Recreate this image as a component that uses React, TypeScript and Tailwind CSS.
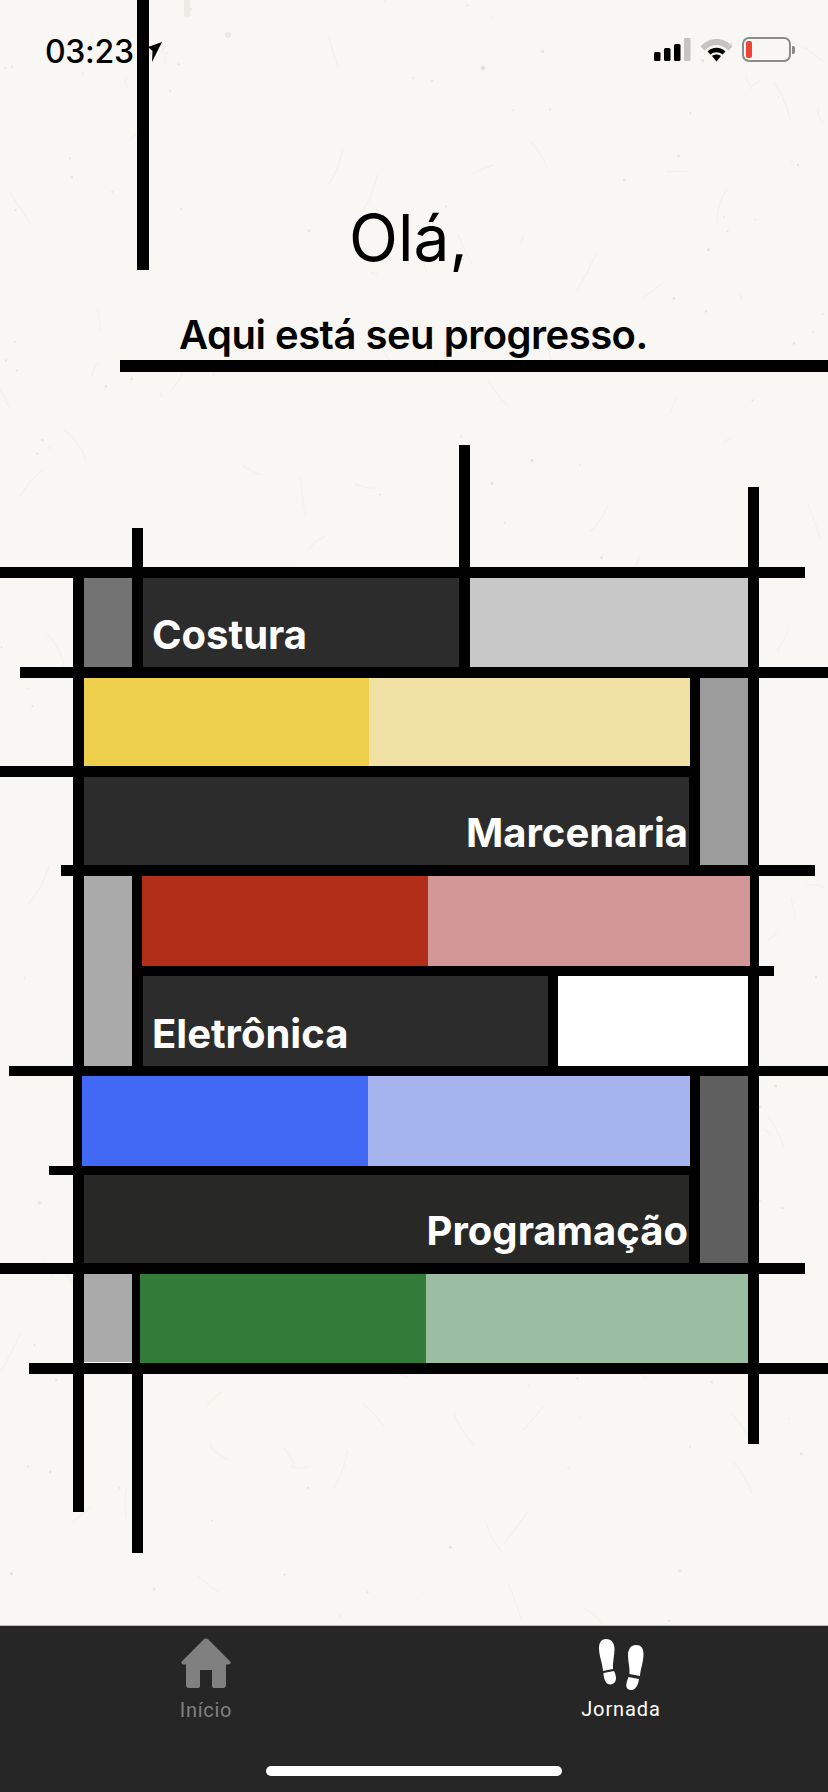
// Jornada progress screen, Mondrian style board
const font = { fontFamily: 'Inter, "Noto Sans", sans-serif' }

// deterministic paper fibres and specks
function paperMarks() {
  let seed = 7
  const rnd = () => {
    seed = (seed * 16807) % 2147483647
    return seed / 2147483647
  }
  const fibres: string[] = []
  for (let i = 0; i < 130; i++) {
    const x = rnd() * 828
    const y = rnd() * 1640
    const dx = (rnd() - 0.5) * 50
    const dy = (rnd() - 0.5) * 80
    fibres.push(`M${x} ${y}q${dx / 2 + (rnd() - 0.5) * 10} ${dy / 2 + (rnd() - 0.5) * 10} ${dx} ${dy}`)
  }
  const specks: { x: number; y: number; r: number }[] = []
  for (let i = 0; i < 190; i++) {
    specks.push({ x: rnd() * 828, y: rnd() * 1640, r: 0.4 + rnd() * 1.2 })
  }
  return { fibres, specks }
}

function Paper() {
  const { fibres, specks } = paperMarks()
  return (
    <svg className="absolute inset-0" width="828" height="1792" fill="none">
      {fibres.map((d, i) => (
        <path key={i} d={d} stroke="#ece9e0" strokeWidth="1.2" opacity="0.45" />
      ))}
      {specks.map((s, i) => (
        <circle key={i} cx={s.x} cy={s.y} r={s.r} fill="#d4d0c6" opacity="0.5" />
      ))}
      <path d="M187 0 V14" stroke="#ecebe6" strokeWidth="6" strokeLinecap="round" />
      <circle cx="228" cy="35" r="3" fill="#e9e7e2" />
      <circle cx="483" cy="68" r="2" fill="#dcdad5" />
    </svg>
  )
}

function StatusBar() {
  return (
    <div className="relative flex h-[100px] items-start justify-between pl-[45px] pr-[33px] pt-[33px]">
      <div className="flex items-center">
        <span className="text-[32px] font-medium leading-[38px] tracking-[-0.3px] text-black" style={font}>
          03:23
        </span>
        <svg className="ml-[14px]" width="15" height="22" viewBox="0 0 15 22">
          <path d="M14 1 L0 6 L4.5 10 L4 21 Z" fill="#000" />
        </svg>
      </div>
      <div className="flex items-center gap-[9px] pt-[4px]">
        <svg width="37" height="24" viewBox="0 0 37 24">
          <rect x="0" y="14" width="6.5" height="9" rx="1.5" fill="#000" />
          <rect x="10" y="10" width="6.5" height="13" rx="1.5" fill="#000" />
          <rect x="20" y="6" width="6.5" height="17" rx="1.5" fill="#000" />
          <rect x="30" y="0" width="6.5" height="23" rx="1" fill="#c4c4c2" />
        </svg>
        <svg width="33" height="24" viewBox="0 0 33 24">
          <path d="M0.5 8.5 C9 -1.5 24 -1.5 32.5 8.5 L28.5 12.5 C21.5 5 11.5 5 4.5 12.5 Z" fill="#c4c4c2" />
          <path d="M7.5 13.5 C12.5 8.5 20.5 8.5 25.5 13.5 L22.5 16.5 C19 13.5 14 13.5 10.5 16.5 Z" fill="#000" />
          <path d="M12 18 C14.5 16 18.5 16 21 18 L16.5 23.5 Z" fill="#000" />
        </svg>
        <div className="flex items-center">
          <div className="flex h-[25px] w-[49px] items-center rounded-[7px] border-2 border-[#8b8b89] pl-[2px]">
            <div className="h-[17px] w-[6px] rounded-[2px] bg-[#ee4433]" />
          </div>
          <div className="ml-[1px] h-[8px] w-[3px] rounded-r-[2px] bg-[#8b8b89]" />
        </div>
      </div>
    </div>
  )
}

function Rule({ className }: { className: string }) {
  return <div className={`bg-black ${className}`} />
}

function Label({ text, right }: { text: string; right?: boolean }) {
  return (
    <span
      className={`pb-[12px] text-[40px] font-bold leading-none text-white ${right ? 'ml-auto pr-[1px]' : 'pl-[9px]'}`}
      style={font}
    >
      {text}
    </span>
  )
}

function Board() {
  return (
    <div className="relative z-10 mt-[195px]">
      <Rule className="h-[11px] w-[805px]" />

      <div className="flex h-[89px] pl-[84px]">
        <div className="w-[48px] bg-[#737373]" />
        <div className="ml-[11px] flex w-[316px] items-end bg-[#2c2c2c]">
          <Label text="Costura" />
        </div>
        <div className="ml-[11px] w-[278px] bg-[#c8c8c8]" />
      </div>
      <Rule className="ml-[20px] h-[11px] w-[808px]" />

      <div className="flex h-[187px]">
        <div className="w-[690px]">
          <div className="flex h-[88px] pl-[84px]">
            <div className="w-[285px] bg-[#eecf4b]" />
            <div className="w-[321px] bg-[#efe2a4]" />
          </div>
          <Rule className="h-[11px] w-[690px]" />
          <div className="ml-[84px] flex h-[88px] w-[606px] items-end border-r border-black bg-[#2c2c2c]">
            <Label text="Marcenaria" right />
          </div>
        </div>
        <div className="w-[10px] bg-black" />
        <div className="w-[48px] bg-[#9c9c9c]" />
      </div>
      <Rule className="ml-[61px] h-[11px] w-[754px]" />

      <div className="flex h-[190px] pl-[84px]">
        <div className="w-[48px] bg-[#aaaaaa]" />
        <div className="w-[642px]">
          <div className="flex h-[90px] pl-[10px]">
            <div className="w-[286px] bg-[#b12f19]" />
            <div className="w-[322px] bg-[#d29696]" />
          </div>
          <Rule className="h-[10px] w-[642px]" />
          <div className="flex h-[90px] pl-[11px]">
            <div className="flex w-[405px] items-end bg-[#2c2c2c]">
              <Label text="Eletrônica" />
            </div>
            <div className="w-[10px] bg-black" />
            <div className="w-[190px] bg-white" />
          </div>
        </div>
      </div>
      <Rule className="ml-[9px] h-[10px] w-[819px]" />

      <div className="flex h-[187px]">
        <div className="w-[690px]">
          <div className="flex h-[90px] pl-[82px]">
            <div className="w-[286px] bg-[#4268f6]" />
            <div className="w-[322px] bg-[#a5b3ee]" />
          </div>
          <Rule className="ml-[49px] h-[9px] w-[641px]" />
          <div className="ml-[84px] flex h-[88px] w-[606px] items-end border-r border-black bg-[#282826]">
            <Label text="Programação" right />
          </div>
        </div>
        <div className="w-[10px] bg-black" />
        <div className="w-[48px] bg-[#5f5f5f]" />
      </div>
      <Rule className="h-[11px] w-[805px]" />

      <div className="flex h-[89px] pl-[84px]">
        <div className="mb-[1px] w-[48px] bg-[#aaaaaa]" />
        <div className="ml-[8px] w-[286px] bg-[#337b38]" />
        <div className="w-[322px] bg-[#9bbea2]" />
      </div>
      <Rule className="ml-[29px] h-[11px] w-[799px]" />
    </div>
  )
}

function HomeIcon() {
  return (
    <svg width="52" height="52" viewBox="0 0 52 52">
      <path
        d="M23.6 1.6 a3.4 3.4 0 0 1 4.8 0 L50 23.2 a2 2 0 0 1 -1.4 3.4 H46 V47 a3 3 0 0 1 -3 3 H34 a2 2 0 0 1 -2 -2 V32 H20 V48 a2 2 0 0 1 -2 2 H9 a3 3 0 0 1 -3 -3 V26.6 H3.4 A2 2 0 0 1 2 23.2 Z"
        fill="#808080"
      />
    </svg>
  )
}

function FeetIcon() {
  return (
    <svg width="70" height="65" viewBox="0 0 70 65">
      <path d="M20 8 C25.5 8 28.5 12 28.5 18 C28.5 25 26.5 31 27 38 L17 40 C16.5 32 13 25 13 17 C13 11 16 8 20 8 Z" fill="#fff" />
      <path d="M17.5 42 L28 40 C30 44 30.5 47 29.5 50 C27.5 54.5 21.5 54.5 19.5 50.5 C18 47.5 17.5 45 17.5 42 Z" fill="#fff" />
      <path d="M50 14 C45 14 42 18 42 24 C42 31 44 37 43.5 43 L54 45 C54.5 38 57.5 31 57.5 23 C57.5 17 55 14 50 14 Z" fill="#fff" />
      <path d="M42.5 46 L53 48 C52.5 52 51.5 55 49 57.5 C45.5 60.5 40.5 59 40.3 55 C40 52 41.5 49 42.5 46 Z" fill="#fff" />
    </svg>
  )
}

function TabBar() {
  return (
    <div className="relative z-10 mt-auto h-[167px] border-t border-[#bdbcb7] bg-[#262626]" style={{ fontFamily: 'Roboto, sans-serif' }}>
      <div className="flex pt-[12px]">
        <div className="ml-[145px] flex w-[122px] flex-col items-center">
          <HomeIcon />
          <span className="mt-[8px] text-[20px] leading-[24px] tracking-[0.7px] text-[#808080]">Início</span>
        </div>
        <div className="ml-[293px] flex w-[122px] flex-col items-center">
          <div className="-mt-[7px] -mb-[7px]">
            <FeetIcon />
          </div>
          <span className="mt-[8px] text-[20px] leading-[24px] tracking-[0.9px] text-white">Jornada</span>
        </div>
      </div>
      <div className="absolute bottom-[16px] left-[266px] h-[10px] w-[296px] rounded-full bg-white" />
    </div>
  )
}

export default function App() {
  return (
    <div className="relative flex h-[1792px] w-[828px] flex-col overflow-hidden bg-[#f8f7f3]">
      <Paper />

      <div className="relative">
        <StatusBar />
        <div className="pl-[349px] pt-[106px] text-[64px] font-normal leading-[64px] text-black" style={font}>
          Olá,
        </div>
        <div className="pl-[179px] pt-[43px] text-[40px] font-semibold leading-[44px] tracking-[-0.5px] text-black" style={font}>
          Aqui está seu progresso.
        </div>
        <div className="ml-[120px] mt-[3px] h-[12px] bg-black" />
      </div>

      {/* loose ends of the board lines */}
      <div className="absolute left-[137px] top-0 h-[270px] w-[12px] bg-black" />
      <div className="absolute left-[73px] top-[567px] h-[945px] w-[11px] bg-black" />
      <div className="absolute left-[132px] top-[528px] h-[1025px] w-[11px] bg-black" />
      <div className="absolute left-[459px] top-[445px] h-[222px] w-[11px] bg-black" />
      <div className="absolute left-[748px] top-[487px] h-[957px] w-[11px] bg-black" />

      <Board />
      <TabBar />
    </div>
  )
}
